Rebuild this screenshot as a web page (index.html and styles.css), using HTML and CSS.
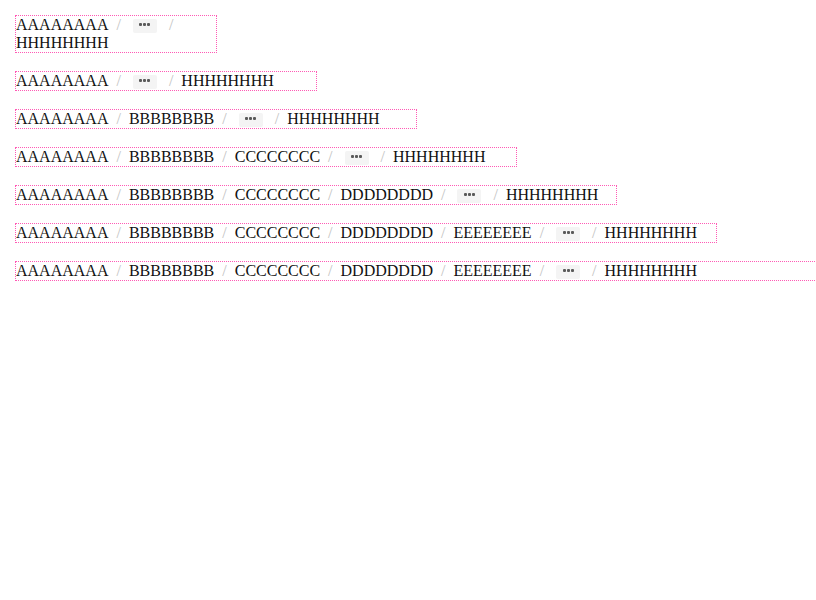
FILE: index.html
```html
<!DOCTYPE html>
<html lang="en">
<head>
<meta charset="utf-8">
<title>Breadcrumbs</title>
<link rel="stylesheet" href="styles.css">
</head>
<body>
<div class="stack">
  <nav class="crumbs w200"><ol>
    <li>AAAAAAAA</li><li class="sep">/</li>
    <li><button class="more" aria-label="Show more"><svg width="11" height="3" viewBox="0 0 11 3"><rect x="0" y="0" width="3" height="3" rx="1"/><rect x="4" y="0" width="3" height="3" rx="1"/><rect x="8" y="0" width="3" height="3" rx="1"/></svg></button></li><li class="sep">/</li>
    <li>HHHHHHHH</li>
  </ol></nav>
  <nav class="crumbs w300"><ol>
    <li>AAAAAAAA</li><li class="sep">/</li>
    <li><button class="more" aria-label="Show more"><svg width="11" height="3" viewBox="0 0 11 3"><rect x="0" y="0" width="3" height="3" rx="1"/><rect x="4" y="0" width="3" height="3" rx="1"/><rect x="8" y="0" width="3" height="3" rx="1"/></svg></button></li><li class="sep">/</li>
    <li>HHHHHHHH</li>
  </ol></nav>
  <nav class="crumbs w400"><ol>
    <li>AAAAAAAA</li><li class="sep">/</li>
    <li>BBBBBBBB</li><li class="sep">/</li>
    <li><button class="more" aria-label="Show more"><svg width="11" height="3" viewBox="0 0 11 3"><rect x="0" y="0" width="3" height="3" rx="1"/><rect x="4" y="0" width="3" height="3" rx="1"/><rect x="8" y="0" width="3" height="3" rx="1"/></svg></button></li><li class="sep">/</li>
    <li>HHHHHHHH</li>
  </ol></nav>
  <nav class="crumbs w500"><ol>
    <li>AAAAAAAA</li><li class="sep">/</li>
    <li>BBBBBBBB</li><li class="sep">/</li>
    <li>CCCCCCCC</li><li class="sep">/</li>
    <li><button class="more" aria-label="Show more"><svg width="11" height="3" viewBox="0 0 11 3"><rect x="0" y="0" width="3" height="3" rx="1"/><rect x="4" y="0" width="3" height="3" rx="1"/><rect x="8" y="0" width="3" height="3" rx="1"/></svg></button></li><li class="sep">/</li>
    <li>HHHHHHHH</li>
  </ol></nav>
  <nav class="crumbs w600"><ol>
    <li>AAAAAAAA</li><li class="sep">/</li>
    <li>BBBBBBBB</li><li class="sep">/</li>
    <li>CCCCCCCC</li><li class="sep">/</li>
    <li>DDDDDDDD</li><li class="sep">/</li>
    <li><button class="more" aria-label="Show more"><svg width="11" height="3" viewBox="0 0 11 3"><rect x="0" y="0" width="3" height="3" rx="1"/><rect x="4" y="0" width="3" height="3" rx="1"/><rect x="8" y="0" width="3" height="3" rx="1"/></svg></button></li><li class="sep">/</li>
    <li>HHHHHHHH</li>
  </ol></nav>
  <nav class="crumbs w700"><ol>
    <li>AAAAAAAA</li><li class="sep">/</li>
    <li>BBBBBBBB</li><li class="sep">/</li>
    <li>CCCCCCCC</li><li class="sep">/</li>
    <li>DDDDDDDD</li><li class="sep">/</li>
    <li>EEEEEEEE</li><li class="sep">/</li>
    <li><button class="more" aria-label="Show more"><svg width="11" height="3" viewBox="0 0 11 3"><rect x="0" y="0" width="3" height="3" rx="1"/><rect x="4" y="0" width="3" height="3" rx="1"/><rect x="8" y="0" width="3" height="3" rx="1"/></svg></button></li><li class="sep">/</li>
    <li>HHHHHHHH</li>
  </ol></nav>
  <nav class="crumbs w800"><ol>
    <li>AAAAAAAA</li><li class="sep">/</li>
    <li>BBBBBBBB</li><li class="sep">/</li>
    <li>CCCCCCCC</li><li class="sep">/</li>
    <li>DDDDDDDD</li><li class="sep">/</li>
    <li>EEEEEEEE</li><li class="sep">/</li>
    <li><button class="more" aria-label="Show more"><svg width="11" height="3" viewBox="0 0 11 3"><rect x="0" y="0" width="3" height="3" rx="1"/><rect x="4" y="0" width="3" height="3" rx="1"/><rect x="8" y="0" width="3" height="3" rx="1"/></svg></button></li><li class="sep">/</li>
    <li>HHHHHHHH</li>
  </ol></nav>
</div>
</body>
</html>
```

FILE: styles.css
```css
html, body {
  margin: 0;
  padding: 0;
  background: #fff;
}
body {
  font-family: "Liberation Serif", "Times New Roman", serif;
  font-size: 16px;
  line-height: 18px;
  color: #111;
}
.stack {
  padding: 15px;
  display: flex;
  flex-direction: column;
  align-items: flex-start;
  gap: 18px;
}
.crumbs {
  border: 1px dotted #ff5ab5;
  flex: none;
}
.w200 { width: 200px; }
.w300 { width: 300px; }
.w400 { width: 400px; }
.w500 { width: 500px; }
.w600 { width: 600px; }
.w700 { width: 700px; }
.w800 { width: 800px; }
.crumbs ol {
  list-style: none;
  margin: 0;
  padding: 0;
  display: flex;
  flex-wrap: wrap;
  align-items: flex-start;
}
.crumbs li {
  white-space: nowrap;
  height: 18px;
}
.crumbs .sep {
  margin: 0 8px;
  color: #c2c2c2;
}
.more {
  display: inline-flex;
  align-items: center;
  justify-content: center;
  width: 24px;
  height: 14px;
  margin: 3px 4px 0;
  padding: 0 0 3px;
  border: 0;
  border-radius: 2px;
  background: #f4f4f4;
  fill: #5a5a5a;
  vertical-align: top;
}
.more svg {
  display: block;
}
```
